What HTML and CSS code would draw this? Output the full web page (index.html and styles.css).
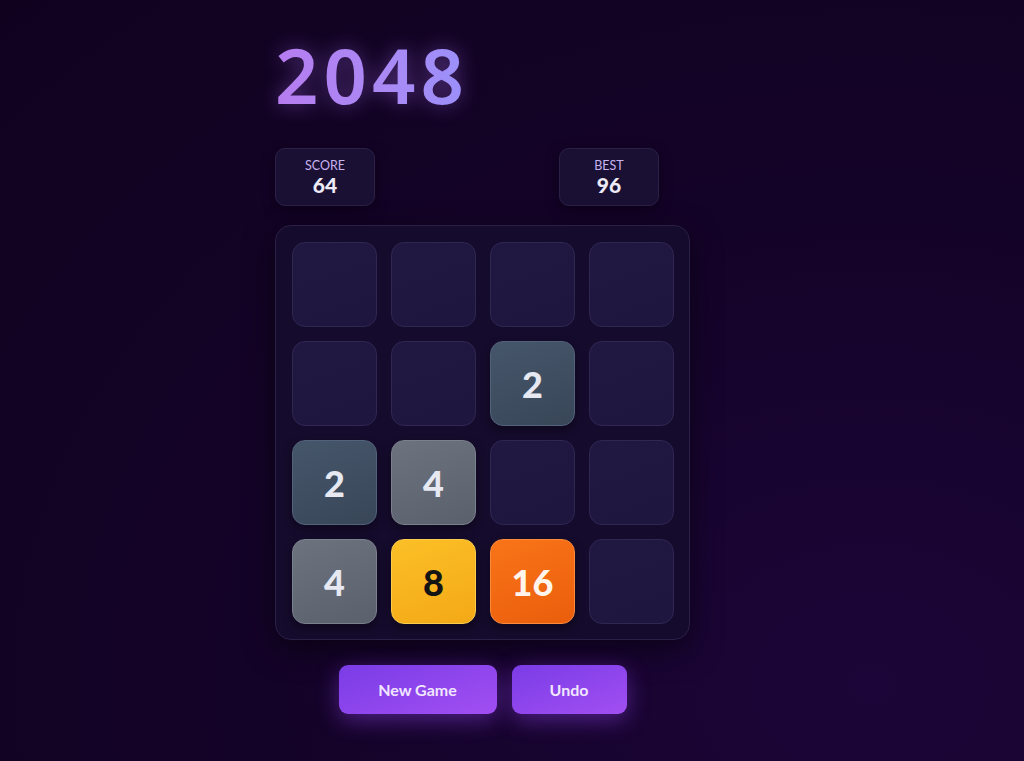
FILE: index.html
```html
<!DOCTYPE html>
<html lang="en">
<head>
  <meta charset="UTF-8" />
  <meta name="viewport" content="width=device-width, initial-scale=1.0" />
  <title>2048</title>
  <link rel="stylesheet" href="styles.css">
</head>
<body>
  <div class="game">
    <h1 class="title">2048</h1>
    <div class="scores">
      <div class="score-box">
        <span class="score-label">SCORE</span>
        <span class="score-value" id="score">64</span>
      </div>
      <div class="score-box">
        <span class="score-label">BEST</span>
        <span class="score-value" id="best">96</span>
      </div>
    </div>
    <div class="board" id="board">
      <div class="cell"></div>
      <div class="cell"></div>
      <div class="cell"></div>
      <div class="cell"></div>

      <div class="cell"></div>
      <div class="cell"></div>
      <div class="cell tile tile-2">2</div>
      <div class="cell"></div>

      <div class="cell tile tile-2">2</div>
      <div class="cell tile tile-4">4</div>
      <div class="cell"></div>
      <div class="cell"></div>

      <div class="cell tile tile-4">4</div>
      <div class="cell tile tile-8">8</div>
      <div class="cell tile tile-16">16</div>
      <div class="cell"></div>
    </div>
    <div class="actions">
      <button class="btn btn-new">New Game</button>
      <button class="btn btn-undo">Undo</button>
    </div>
  </div>
</body>
</html>
```

FILE: styles.css
```css
html, body {
  height: 100%;
}
body {
  font-family: Lato, "Noto Sans", sans-serif;
  margin: 0;
  background: radial-gradient(ellipse at 85% 90%, #1c0538 0%, #140328 50%, #10021f 100%);
  color: #fff;
  overflow: hidden;
}
.game {
  width: 415px;
  margin-left: 275px;
  padding-top: 31px;
  display: flex;
  flex-direction: column;
}
.title {
  margin: 0;
  font-family: "Noto Sans", sans-serif;
  font-size: 76px;
  font-weight: 600;
  line-height: 88px;
  letter-spacing: 5px;
  background: linear-gradient(90deg, #b67cf0 0%, #a98af5 60%, #9a90fa 100%);
  -webkit-background-clip: text;
  background-clip: text;
  color: transparent;
  filter: drop-shadow(0 0 10px rgba(168, 110, 245, 0.45));
  align-self: flex-start;
}
.scores {
  display: flex;
  justify-content: space-between;
  width: 384px;
  margin-top: 29px;
}
.score-box {
  width: 100px;
  height: 58px;
  box-sizing: border-box;
  background: #1a1033;
  border: 1px solid #2b2148;
  border-radius: 10px;
  display: flex;
  flex-direction: column;
  align-items: center;
  justify-content: center;
  box-shadow: 0 4px 14px rgba(0, 0, 0, 0.35);
}
.score-label {
  font-size: 12.5px;
  color: #c7b3f0;
  line-height: 14px;
}
.score-value {
  font-size: 21px;
  font-weight: 900;
  color: #eceaf6;
  line-height: 23px;
}
.board {
  margin-top: 19px;
  width: 415px;
  height: 415px;
  box-sizing: border-box;
  padding: 16px;
  display: grid;
  grid-template-columns: repeat(4, 85px);
  grid-template-rows: repeat(4, 85px);
  gap: 14px;
  background: #150b2c;
  border: 1px solid #2a1f47;
  border-radius: 16px;
  box-shadow: 0 10px 30px rgba(0, 0, 0, 0.5);
}
.cell {
  box-sizing: border-box;
  border-radius: 13px;
  background: linear-gradient(160deg, #211842 0%, #1f1640 100%);
  border: 1px solid #2f2652;
  display: flex;
  align-items: center;
  justify-content: center;
  font-size: 36px;
  font-weight: 900;
  color: #e6e8f2;
}
.tile {
  box-shadow: 0 4px 10px rgba(0, 0, 0, 0.35);
}
.tile-2 {
  background: linear-gradient(160deg, #46566a 0%, #384658 100%);
  border-color: #52627a;
}
.tile-4 {
  background: linear-gradient(160deg, #6c737e 0%, #5a616d 100%);
  border-color: #7b818c;
}
.tile-8 {
  background: linear-gradient(160deg, #fbbf26 0%, #f4a916 100%);
  border-color: #fccd4c;
  color: #141414;
}
.tile-16 {
  background: linear-gradient(160deg, #f97418 0%, #ea5e0c 100%);
  border-color: #fb8a3c;
  color: #fff5ec;
}
.actions {
  display: flex;
  justify-content: center;
  gap: 15px;
  margin-top: 25px;
}
.btn {
  height: 49px;
  border: none;
  border-radius: 9px;
  font-family: inherit;
  font-size: 16px;
  font-weight: 700;
  color: #f1e6ff;
  background: linear-gradient(160deg, #7a3ce6 0%, #a24ff2 100%);
  box-shadow: 0 6px 22px rgba(147, 64, 240, 0.45);
  cursor: pointer;
}
.btn-new {
  width: 158px;
}
.btn-undo {
  width: 115px;
}
```
